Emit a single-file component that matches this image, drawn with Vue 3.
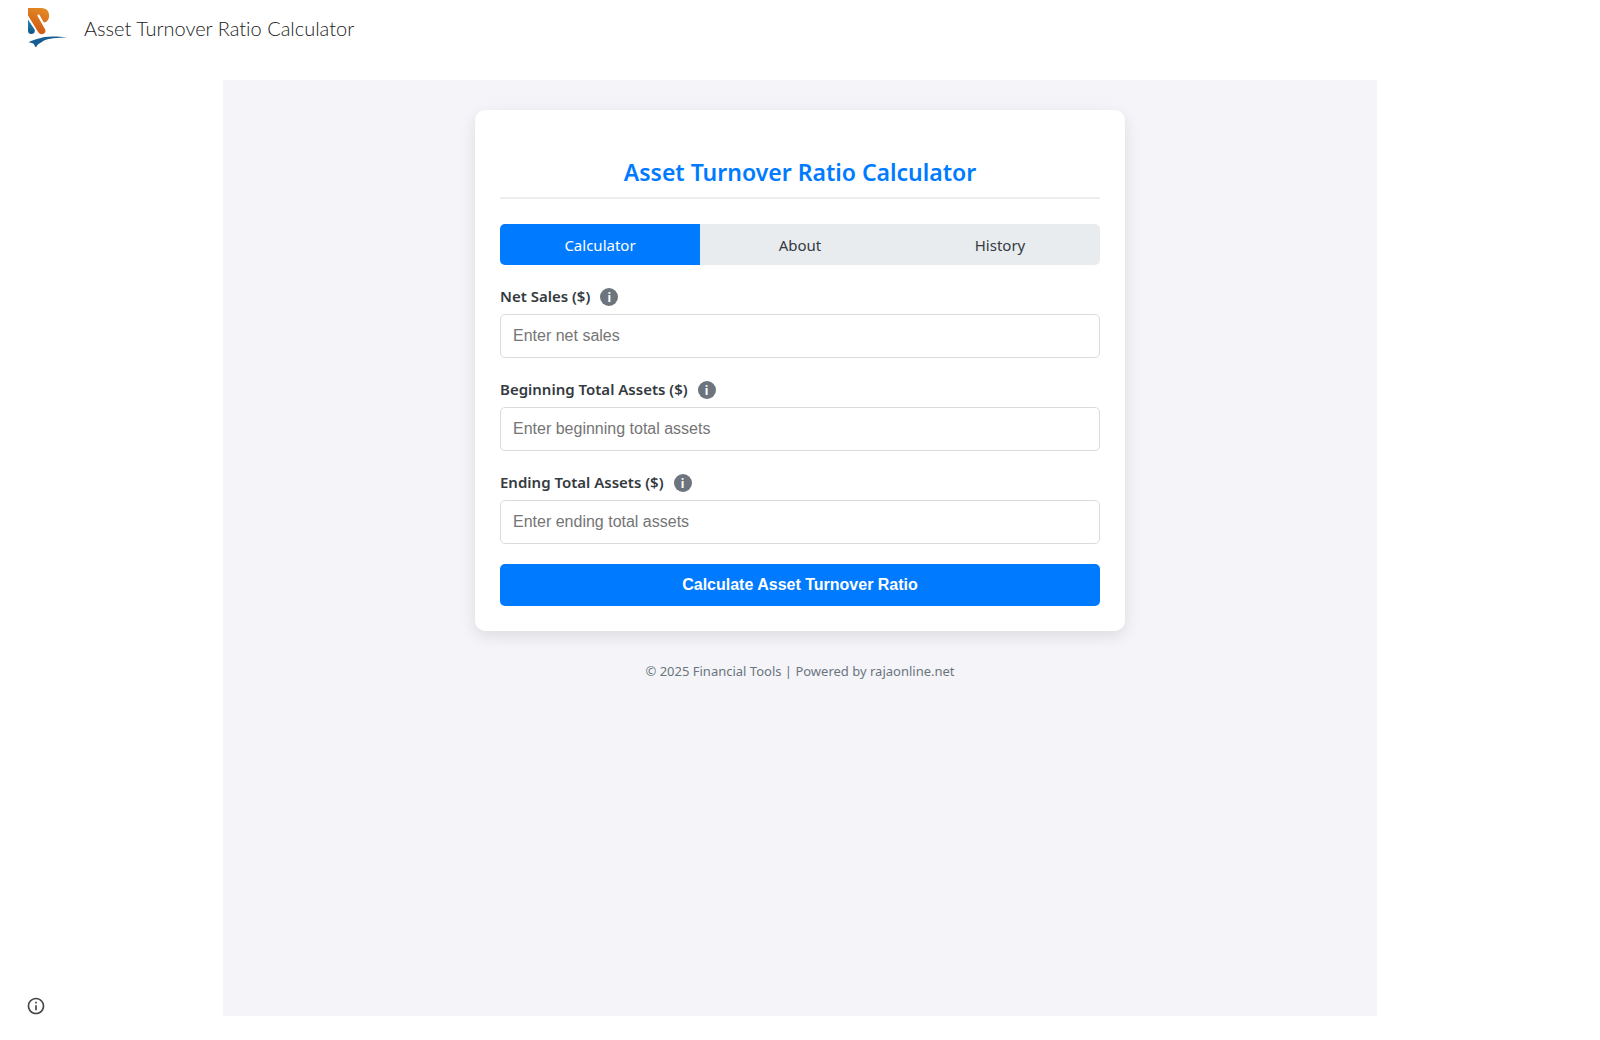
<script setup>
import { ref } from "vue";

const tabs = ["Calculator", "About", "History"];
const activeTab = ref("Calculator");

const fields = [
  {
    id: "netSales",
    label: "Net Sales ($)",
    placeholder: "Enter net sales",
    hint: "Total revenue after returns, allowances and discounts.",
  },
  {
    id: "beginningAssets",
    label: "Beginning Total Assets ($)",
    placeholder: "Enter beginning total assets",
    hint: "Total assets at the start of the period.",
  },
  {
    id: "endingAssets",
    label: "Ending Total Assets ($)",
    placeholder: "Enter ending total assets",
    hint: "Total assets at the end of the period.",
  },
];

const values = ref({ netSales: "", beginningAssets: "", endingAssets: "" });
const result = ref("");
const history = ref([]);

const calculate = () => {
  const sales = parseFloat(values.value.netSales);
  const average =
    (parseFloat(values.value.beginningAssets) + parseFloat(values.value.endingAssets)) / 2;

  if (isNaN(sales) || isNaN(average) || average <= 0) {
    result.value = "Please enter valid positive numbers.";
    return;
  }

  const ratio = (sales / average).toFixed(2);
  result.value = `Asset Turnover Ratio: ${ratio}`;
  history.value.unshift(ratio);
};
</script>

<template>
  <div class="page">
    <header class="site-header">
      <a href="#" class="logo" aria-label="Home" @click.prevent>
        <svg width="40" height="40" viewBox="0 0 40 40" aria-hidden="true">
          <defs>
            <linearGradient id="orange" x1="0.7" y1="0" x2="0.4" y2="1">
              <stop offset="0" stop-color="#e38b25" />
              <stop offset="1" stop-color="#cf5414" />
            </linearGradient>
            <linearGradient id="blue" x1="0" y1="0" x2="0" y2="1">
              <stop offset="0" stop-color="#2189b0" />
              <stop offset="1" stop-color="#125388" />
            </linearGradient>
          </defs>
          <path d="M0 11.500 L6.800 22 V23 Q6.500 26 3.400 26 Q0 26 0 22.500Z" fill="url(#blue)" />
          <path
            d="M0 0 H13.500 C18.500 0 21.300 3.600 21.100 8 C21 11.500 19 14.200 15.800 14.600 L11.600 7 C10.900 5.900 8.900 6.700 9.500 8 L17.200 21.500 C18.300 24.200 16 26.300 13.700 26.200 C11.900 26.200 10.900 25.200 10 23.700 L0 7.500Z"
            fill="url(#orange)"
          />
          <path
            d="M0.500 34.300 C4 32.500 7 31.600 9 31 C18 27.500 29 28 39 29.700 C28 29.500 18 30 13.500 34.300 C11 35.300 9 37 8 39.300 C6.800 38.500 6.300 37.300 6 36 C4 35 2 34.500 0.500 34.300Z"
            fill="#145c93"
          />
        </svg>
      </a>
      <a href="#" class="site-title" @click.prevent>Asset Turnover Ratio Calculator</a>
    </header>

    <main class="frame">
      <section class="card">
        <h2>Asset Turnover Ratio Calculator</h2>

        <nav class="tabs">
          <button
            v-for="tab in tabs"
            :key="tab"
            type="button"
            :class="{ active: activeTab === tab }"
            @click="activeTab = tab"
          >
            {{ tab }}
          </button>
        </nav>

        <form v-if="activeTab === 'Calculator'" @submit.prevent="calculate">
          <div v-for="field in fields" :key="field.id" class="form-group">
            <div class="label-row">
              <label :for="field.id">{{ field.label }}</label>
              <span class="tip" :title="field.hint">i</span>
            </div>
            <input
              :id="field.id"
              v-model="values[field.id]"
              type="number"
              step="any"
              :placeholder="field.placeholder"
            />
          </div>
          <button type="submit" class="submit">Calculate Asset Turnover Ratio</button>
          <p v-if="result" class="result">{{ result }}</p>
        </form>

        <p v-else-if="activeTab === 'About'">
          The asset turnover ratio is net sales divided by average total assets.
        </p>

        <div v-else>
          <p v-if="!history.length">No calculations yet.</p>
          <p v-for="(item, index) in history" :key="index">{{ item }}</p>
        </div>
      </section>

      <footer>© 2025 Financial Tools | Powered by rajaonline.net</footer>
    </main>

    <button type="button" class="site-info" aria-label="Site information">
      <svg width="20" height="20" viewBox="0 0 24 24" aria-hidden="true">
        <path
          fill="#444746"
          d="M11 17h2v-6h-2v6zm1-15C6.480 2 2 6.480 2 12s4.480 10 10 10 10-4.480 10-10S17.520 2 12 2zm0 18c-4.410 0-8-3.590-8-8s3.590-8 8-8 8 3.590 8 8-3.590 8-8 8zM11 9h2V7h-2v2z"
        />
      </svg>
    </button>
  </div>
</template>

<style>
body {
  margin: 0;
  background: #fff;
}
</style>

<style scoped>
.page {
  min-height: 100vh;
  box-sizing: border-box;
  display: flex;
  flex-direction: column;
  padding-bottom: 24px;
  font-family: "Segoe UI", "Noto Sans", "Open Sans", sans-serif;
  font-size: 15px;
  color: #343a40;
}

.site-header {
  display: flex;
  align-items: center;
  gap: 16px;
  height: 56px;
  margin-bottom: 24px;
  padding: 0 28px;
}

.logo svg {
  display: block;
}

.site-title {
  font-family: Lato, sans-serif;
  font-size: 20px;
  font-weight: 300;
  font-variant-ligatures: none;
  line-height: 24px;
  color: #212121;
  text-decoration: none;
}

.frame {
  flex: 1;
  width: calc(100% - 64px);
  max-width: 1154px;
  box-sizing: border-box;
  margin: 0 auto;
  padding: 30px 20px;
  background: #f4f4f9;
}

.card {
  max-width: 650px;
  box-sizing: border-box;
  margin: 0 auto;
  padding: 25px;
  background: #fff;
  border-radius: 10px;
  box-shadow: 0 5px 15px rgba(0, 0, 0, 0.1);
}

h2 {
  margin: 20px 0 25px;
  padding-bottom: 8px;
  border-bottom: 2px solid #eee;
  color: #007bff;
  font-size: 23px;
  font-weight: 600;
  line-height: 34px;
  text-align: center;
}

.tabs {
  display: flex;
  margin-bottom: 20px;
  border-radius: 5px;
  overflow: hidden;
  background: #e9ecef;
}

.tabs button {
  flex: 1;
  padding: 9px 8px 7px;
  border: none;
  background: transparent;
  color: #343a40;
  font-family: inherit;
  font-size: 15px;
  line-height: 25px;
  cursor: pointer;
}

.tabs button.active {
  background: #007bff;
  color: #fff;
}

.form-group {
  margin-bottom: 20px;
}

.label-row {
  display: flex;
  align-items: center;
  gap: 10px;
  margin-bottom: 5px;
}

label {
  padding-bottom: 2px;
  font-weight: 600;
  line-height: 22px;
}

.tip {
  width: 18px;
  height: 18px;
  border-radius: 50%;
  background: #6c757d;
  color: #fff;
  font-size: 12px;
  font-weight: 700;
  line-height: 20px;
  text-align: center;
  cursor: help;
}

input {
  display: block;
  width: 100%;
  height: 44px;
  box-sizing: border-box;
  padding: 12px;
  border: 1px solid #d9dbdd;
  border-radius: 5px;
  background: #fff;
  font-family: "Liberation Sans", Arial, sans-serif;
  font-size: 16px;
}

input::placeholder {
  color: #757575;
}

.submit {
  width: 100%;
  height: 42px;
  display: block;
  padding: 0 12px;
  border: none;
  border-radius: 5px;
  background: #007bff;
  color: #fff;
  font-family: "Liberation Sans", Arial, sans-serif;
  font-size: 16px;
  font-weight: 700;
  cursor: pointer;
}

.submit:hover {
  background: #0069d9;
}

.result {
  margin: 20px 0 0;
  text-align: center;
}

footer {
  margin-top: 30px;
  color: #6c757d;
  font-size: 13px;
  line-height: 20px;
  text-align: center;
}

.site-info {
  position: fixed;
  left: 26px;
  bottom: 24px;
  padding: 0;
  border: none;
  background: none;
  cursor: pointer;
}

.site-info svg {
  display: block;
}
</style>
